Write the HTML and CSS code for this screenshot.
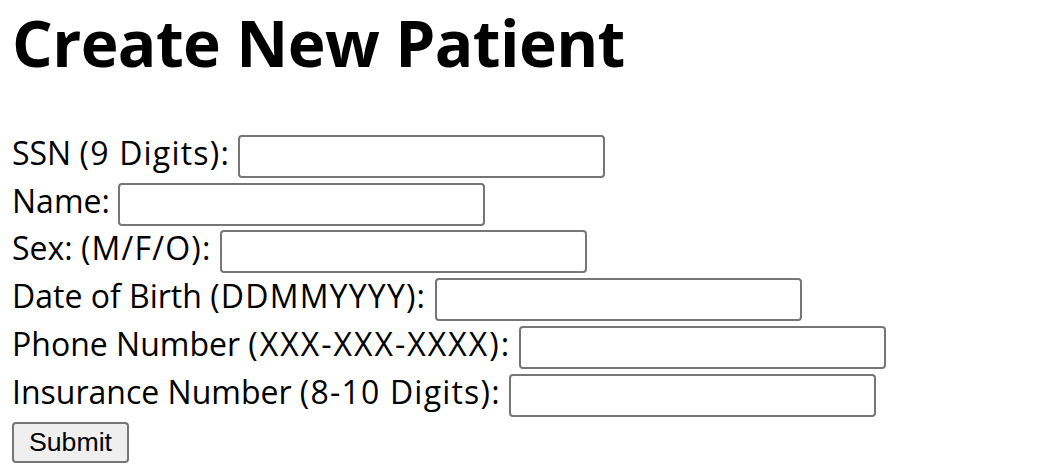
FILE: index.html
```html
<!DOCTYPE html>
<html lang="en">
<head>
<meta charset="utf-8">
<title>Create New Patient</title>
<link rel="stylesheet" href="styles.css">
</head>
<body>
<h1 class="title">Create New Patient</h1>
<form class="patient-form">
  <div class="row"><label class="label" for="ssn">SSN <span class="hint">(9 Digits):</span></label><input class="field" id="ssn" type="text"></div>
  <div class="row"><label class="label" for="name">Name:</label><input class="field" id="name" type="text"></div>
  <div class="row"><label class="label" for="sex">Sex: <span class="hint">(M/F/O):</span></label><input class="field" id="sex" type="text"></div>
  <div class="row"><label class="label" for="dob">Date of Birth <span class="hint">(DDMMYYYY):</span></label><input class="field" id="dob" type="text"></div>
  <div class="row"><label class="label" for="phone">Phone Number <span class="hint hint-wide">(XXX-XXX-XXXX):</span></label><input class="field" id="phone" type="text"></div>
  <div class="row"><label class="label" for="ins">Insurance Number <span class="hint">(8-10 Digits):</span></label><input class="field" id="ins" type="text"></div>
  <div class="row"><button class="submit" type="submit">Submit</button></div>
</form>
</body>
</html>
```
FILE: styles.css
```css
html, body {
  background: #ffffff;
}
body {
  margin: 0;
  padding: 0 12px;
  font-family: "Open Sans", Lato, sans-serif;
  color: #000000;
}
.title {
  margin: 5px 0 53px;
  font-family: "Open Sans", Lato, sans-serif;
  font-weight: 700;
  font-size: 64px;
  line-height: 76.8px;
  letter-spacing: -0.6px;
}
.patient-form {
  display: flex;
  flex-direction: column;
  row-gap: 4.8px;
}
.row {
  display: flex;
  align-items: baseline;
}
.label {
  font-size: 32px;
  line-height: 30px;
  white-space: pre;
}
.label::after {
  content: " ";
}
.hint {
  letter-spacing: 1.2px;
}
.hint-wide {
  letter-spacing: 2px;
}
.field {
  box-sizing: border-box;
  width: 367px;
  height: 43px;
  margin: 0;
  padding: 2px 4px;
  border: 2px solid #767676;
  border-radius: 4px;
  font-family: "Liberation Sans", Arial, sans-serif;
  font-size: 26.67px;
  background: #ffffff;
}
.submit {
  box-sizing: border-box;
  width: 117px;
  height: 41px;
  margin: 0;
  padding: 2px 12px;
  border: 2px solid #767676;
  border-radius: 4px;
  background: #efefef;
  color: #000000;
  font-family: "Liberation Sans", Arial, sans-serif;
  font-size: 26.67px;
}
```
